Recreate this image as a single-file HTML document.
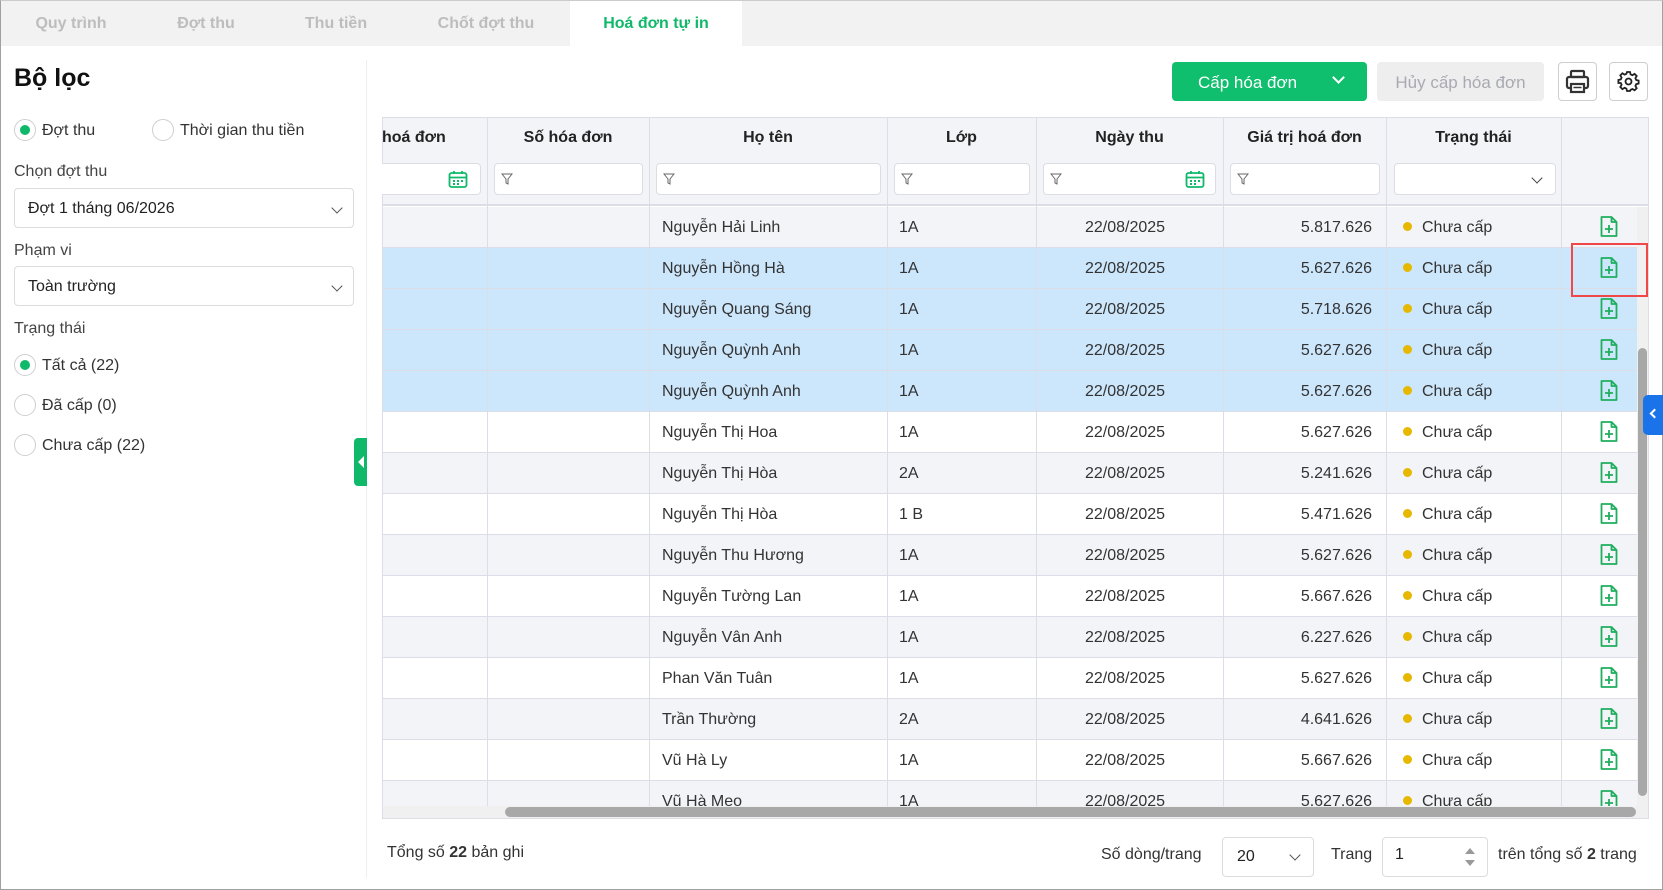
<!DOCTYPE html>
<html><head><meta charset="utf-8"><style>
*{box-sizing:border-box;margin:0;padding:0}
body{width:1663px;height:890px;overflow:hidden;font-family:"Liberation Sans",Arial,sans-serif;color:#222;background:#fff;position:relative;font-size:16px}
.frame{position:absolute;left:0;top:0;width:1663px;height:890px;border:1px solid #a0a0a0;border-top-color:#ccc}
.tabs{position:absolute;left:1px;top:1px;width:1661px;height:45px;background:#f2f2f2}
.tab{position:absolute;top:0;height:45px;line-height:45px;font-size:16px;color:#bdbdbd;font-weight:bold;text-align:center}
.tab.act{background:#fff;color:#10b96a}
.abs{position:absolute}
.lbl{position:absolute;left:14px;font-size:16px;color:#444}
.radio{position:absolute;width:22px;height:22px;border:1px solid #cfcfcf;border-radius:50%;background:#fff}
.radio.on::after{content:"";position:absolute;left:5px;top:5px;width:10px;height:10px;border-radius:50%;background:#10b96a}
.sel{position:absolute;left:14px;width:340px;height:40px;border:1px solid #dcdcdc;border-radius:4px;padding-left:13px;line-height:40px;font-size:16px;color:#222}
.chev{position:absolute;right:12px;top:15px;width:8px;height:8px;border-right:1.6px solid #555;border-bottom:1.6px solid #555;transform:rotate(45deg)}
.th{position:absolute;top:118px;height:40px;line-height:40px;font-weight:bold;font-size:16px;text-align:center;color:#222}
.fi{position:absolute;top:163px;height:32px;background:#fff;border:1px solid #dcdde3;border-radius:4px}
.row{position:absolute;left:382px;width:1255px;height:41px;border-bottom:1px solid #dcdde6;font-size:16px;color:#333}
.row div{position:absolute;top:0;line-height:42px;white-space:nowrap}
.row div.d{top:15px;width:9px;height:9px;border-radius:50%;background:#e6b800;left:1021px}
.vl{position:absolute;top:117px;width:1px;height:690px;background:#dcdde6}
</style></head><body>
<div class="frame"></div>
<div class="tabs">
<div class="tab" style="left:0;width:140px">Quy trình</div>
<div class="tab" style="left:140px;width:130px">Đợt thu</div>
<div class="tab" style="left:270px;width:130px">Thu tiền</div>
<div class="tab" style="left:400px;width:170px">Chốt đợt thu</div>
<div class="tab act" style="left:569px;width:172px">Hoá đơn tự in</div>
</div>

<div class="abs" style="left:14px;top:64px;font-size:25px;font-weight:bold;color:#111">Bộ lọc</div>
<div class="radio on" style="left:14px;top:119px"></div>
<div class="lbl" style="left:42px;top:122px;color:#333">Đợt thu</div>
<div class="radio" style="left:152px;top:119px"></div>
<div class="lbl" style="left:180px;top:122px;color:#333">Thời gian thu tiền</div>
<div class="lbl" style="top:163px">Chọn đợt thu</div>
<div class="sel" style="top:188px">Đợt 1 tháng 06/2026<span class="chev"></span></div>
<div class="lbl" style="top:242px">Phạm vi</div>
<div class="sel" style="top:266px">Toàn trường<span class="chev"></span></div>
<div class="lbl" style="top:320px">Trạng thái</div>
<div class="radio on" style="left:14px;top:354px"></div>
<div class="lbl" style="left:42px;top:357px;color:#333">Tất cả (22)</div>
<div class="radio" style="left:14px;top:394px"></div>
<div class="lbl" style="left:42px;top:397px;color:#333">Đã cấp (0)</div>
<div class="radio" style="left:14px;top:434px"></div>
<div class="lbl" style="left:42px;top:437px;color:#333">Chưa cấp (22)</div>
<div class="abs" style="left:366px;top:60px;width:1px;height:818px;background:#eceef2"></div>
<div class="abs" style="left:354px;top:438px;width:13px;height:48px;background:#10b96a;border-radius:4px 0 0 4px"></div>
<div class="abs" style="left:358px;top:456px;width:0;height:0;border-right:6px solid #fff;border-top:6px solid transparent;border-bottom:6px solid transparent"></div>

<div class="abs" style="left:1172px;top:62px;width:195px;height:39px;background:#10bf6e;border-radius:4px;color:#fff;font-size:17px;line-height:41px;padding-left:26px">Cấp hóa đơn
<span style="position:absolute;right:24px;top:11px;width:9px;height:9px;border-right:2px solid #fff;border-bottom:2px solid #fff;transform:rotate(45deg)"></span></div>
<div class="abs" style="left:1377px;top:62px;width:167px;height:39px;background:#eeeeee;border-radius:4px;color:#a9a9b2;font-size:17px;line-height:41px;text-align:center">Hủy cấp hóa đơn</div>
<div class="abs" style="left:1558px;top:62px;width:39px;height:39px;border:1px solid #cfcfcf;border-radius:4px">
<svg width="37" height="37" viewBox="0 0 37 37"><g fill="none" stroke="#333" stroke-width="2.2"><rect x="12" y="8" width="13" height="6" rx="1"/><rect x="8" y="14" width="21" height="11" rx="2"/><rect x="12" y="21" width="13" height="8" fill="#fff"/></g><line x1="14.5" y1="24.5" x2="22.5" y2="24.5" stroke="#333" stroke-width="1.5"/></svg></div>
<div class="abs" style="left:1609px;top:62px;width:39px;height:39px;border:1px solid #cfcfcf;border-radius:4px">
<svg width="37" height="37" viewBox="0 0 37 37"><g fill="none" stroke="#222" stroke-width="1.8"><circle cx="18.5" cy="18.5" r="3"/><path d="M17 9h3l.6 2.4 1.8.8 2.2-1.3 2.1 2.1-1.3 2.2.8 1.8 2.4.6v3l-2.4.6-.8 1.8 1.3 2.2-2.1 2.1-2.2-1.3-1.8.8L20 28h-3l-.6-2.4-1.8-.8-2.2 1.3-2.1-2.1 1.3-2.2-.8-1.8L8.4 20v-3l2.4-.6.8-1.8-1.3-2.2 2.1-2.1 2.2 1.3 1.8-.8z"/></g></svg></div>

<div class="abs" style="left:382px;top:117px;width:1267px;height:702px;border:1px solid #dcdde6;background:#fff"></div>
<div class="abs" style="left:383px;top:118px;width:1265px;height:88px;background:#f3f4f8;border-bottom:2px solid #dcdde6"></div>
<div class="th" style="left:382px;width:105px;text-align:left">hoá đơn</div>
<div class="th" style="left:487px;width:162px">Số hóa đơn</div>
<div class="th" style="left:649px;width:238px">Họ tên</div>
<div class="th" style="left:887px;width:149px">Lớp</div>
<div class="th" style="left:1036px;width:187px">Ngày thu</div>
<div class="th" style="left:1223px;width:163px">Giá trị hoá đơn</div>
<div class="th" style="left:1386px;width:175px">Trạng thái</div>
<div class="fi" style="left:382px;width:99px;border-left:none;border-radius:0 4px 4px 0"><svg class="abs" style="left:66px;top:6px" width="20" height="19" viewBox="0 0 20 19"><g fill="none" stroke="#10b96a" stroke-width="1.8"><rect x="1.5" y="3" width="17" height="14" rx="2"/><line x1="1.5" y1="7.5" x2="18.5" y2="7.5"/><line x1="6" y1="1" x2="6" y2="4"/><line x1="14" y1="1" x2="14" y2="4"/></g><g fill="#10b96a"><rect x="5" y="10" width="2" height="2"/><rect x="9" y="10" width="2" height="2"/><rect x="13" y="10" width="2" height="2"/><rect x="5" y="13" width="2" height="2"/><rect x="9" y="13" width="2" height="2"/></g></svg></div>
<div class="fi" style="left:494px;width:149px"></div>
<div class="fi" style="left:656px;width:225px"></div>
<div class="fi" style="left:894px;width:136px"></div>
<div class="fi" style="left:1043px;width:173px"><svg class="abs" style="left:141px;top:6px" width="20" height="19" viewBox="0 0 20 19"><g fill="none" stroke="#10b96a" stroke-width="1.8"><rect x="1.5" y="3" width="17" height="14" rx="2"/><line x1="1.5" y1="7.5" x2="18.5" y2="7.5"/><line x1="6" y1="1" x2="6" y2="4"/><line x1="14" y1="1" x2="14" y2="4"/></g><g fill="#10b96a"><rect x="5" y="10" width="2" height="2"/><rect x="9" y="10" width="2" height="2"/><rect x="13" y="10" width="2" height="2"/><rect x="5" y="13" width="2" height="2"/><rect x="9" y="13" width="2" height="2"/></g></svg></div>
<div class="fi" style="left:1230px;width:150px"></div>
<div class="fi" style="left:1394px;width:162px"><span class="chev" style="top:10px;right:14px;border-color:#444"></span></div>
<svg class="abs" style="left:501px;top:173px" width="12" height="12" viewBox="0 0 12 12"><path d="M1 1h10L7 6v5L5 10V6z" fill="none" stroke="#666" stroke-width="1"/></svg>
<svg class="abs" style="left:663px;top:173px" width="12" height="12" viewBox="0 0 12 12"><path d="M1 1h10L7 6v5L5 10V6z" fill="none" stroke="#666" stroke-width="1"/></svg>
<svg class="abs" style="left:901px;top:173px" width="12" height="12" viewBox="0 0 12 12"><path d="M1 1h10L7 6v5L5 10V6z" fill="none" stroke="#666" stroke-width="1"/></svg>
<svg class="abs" style="left:1050px;top:173px" width="12" height="12" viewBox="0 0 12 12"><path d="M1 1h10L7 6v5L5 10V6z" fill="none" stroke="#666" stroke-width="1"/></svg>
<svg class="abs" style="left:1237px;top:173px" width="12" height="12" viewBox="0 0 12 12"><path d="M1 1h10L7 6v5L5 10V6z" fill="none" stroke="#666" stroke-width="1"/></svg>

<div class="abs" style="left:383px;top:207px;width:1254px;height:599px;overflow:hidden">
<div style="position:relative;left:-383px;top:-207px">
<div class="row" style="top:207px;background:#f3f4f8"><div style="left:280px">Nguyễn Hải Linh</div><div style="left:517px">1A</div><div style="left:703px">22/08/2025</div><div style="right:265px">5.817.626</div><div class="d"></div><div style="left:1040px">Chưa cấp</div></div>
<div class="row" style="top:248px;background:#cce6fb"><div style="left:280px">Nguyễn Hồng Hà</div><div style="left:517px">1A</div><div style="left:703px">22/08/2025</div><div style="right:265px">5.627.626</div><div class="d"></div><div style="left:1040px">Chưa cấp</div></div>
<div class="row" style="top:289px;background:#cce6fb"><div style="left:280px">Nguyễn Quang Sáng</div><div style="left:517px">1A</div><div style="left:703px">22/08/2025</div><div style="right:265px">5.718.626</div><div class="d"></div><div style="left:1040px">Chưa cấp</div></div>
<div class="row" style="top:330px;background:#cce6fb"><div style="left:280px">Nguyễn Quỳnh Anh</div><div style="left:517px">1A</div><div style="left:703px">22/08/2025</div><div style="right:265px">5.627.626</div><div class="d"></div><div style="left:1040px">Chưa cấp</div></div>
<div class="row" style="top:371px;background:#cce6fb"><div style="left:280px">Nguyễn Quỳnh Anh</div><div style="left:517px">1A</div><div style="left:703px">22/08/2025</div><div style="right:265px">5.627.626</div><div class="d"></div><div style="left:1040px">Chưa cấp</div></div>
<div class="row" style="top:412px;background:#fff"><div style="left:280px">Nguyễn Thị Hoa</div><div style="left:517px">1A</div><div style="left:703px">22/08/2025</div><div style="right:265px">5.627.626</div><div class="d"></div><div style="left:1040px">Chưa cấp</div></div>
<div class="row" style="top:453px;background:#f3f4f8"><div style="left:280px">Nguyễn Thị Hòa</div><div style="left:517px">2A</div><div style="left:703px">22/08/2025</div><div style="right:265px">5.241.626</div><div class="d"></div><div style="left:1040px">Chưa cấp</div></div>
<div class="row" style="top:494px;background:#fff"><div style="left:280px">Nguyễn Thị Hòa</div><div style="left:517px">1 B</div><div style="left:703px">22/08/2025</div><div style="right:265px">5.471.626</div><div class="d"></div><div style="left:1040px">Chưa cấp</div></div>
<div class="row" style="top:535px;background:#f3f4f8"><div style="left:280px">Nguyễn Thu Hương</div><div style="left:517px">1A</div><div style="left:703px">22/08/2025</div><div style="right:265px">5.627.626</div><div class="d"></div><div style="left:1040px">Chưa cấp</div></div>
<div class="row" style="top:576px;background:#fff"><div style="left:280px">Nguyễn Tường Lan</div><div style="left:517px">1A</div><div style="left:703px">22/08/2025</div><div style="right:265px">5.667.626</div><div class="d"></div><div style="left:1040px">Chưa cấp</div></div>
<div class="row" style="top:617px;background:#f3f4f8"><div style="left:280px">Nguyễn Vân Anh</div><div style="left:517px">1A</div><div style="left:703px">22/08/2025</div><div style="right:265px">6.227.626</div><div class="d"></div><div style="left:1040px">Chưa cấp</div></div>
<div class="row" style="top:658px;background:#fff"><div style="left:280px">Phan Văn Tuân</div><div style="left:517px">1A</div><div style="left:703px">22/08/2025</div><div style="right:265px">5.627.626</div><div class="d"></div><div style="left:1040px">Chưa cấp</div></div>
<div class="row" style="top:699px;background:#f3f4f8"><div style="left:280px">Trần Thường</div><div style="left:517px">2A</div><div style="left:703px">22/08/2025</div><div style="right:265px">4.641.626</div><div class="d"></div><div style="left:1040px">Chưa cấp</div></div>
<div class="row" style="top:740px;background:#fff"><div style="left:280px">Vũ Hà Ly</div><div style="left:517px">1A</div><div style="left:703px">22/08/2025</div><div style="right:265px">5.667.626</div><div class="d"></div><div style="left:1040px">Chưa cấp</div></div>
<div class="row" style="top:781px;background:#f3f4f8"><div style="left:280px">Vũ Hà Meo</div><div style="left:517px">1A</div><div style="left:703px">22/08/2025</div><div style="right:265px">5.627.626</div><div class="d"></div><div style="left:1040px">Chưa cấp</div></div>
</div></div>

<div class="vl" style="left:487px"></div>
<div class="vl" style="left:649px"></div>
<div class="vl" style="left:887px"></div>
<div class="vl" style="left:1036px"></div>
<div class="vl" style="left:1223px"></div>
<div class="vl" style="left:1386px"></div>
<div class="vl" style="left:1561px"></div>

<div class="abs" style="left:1600px;top:216px;width:18px;height:590px;overflow:hidden">
<svg width="18" height="600" viewBox="0 0 18 600">
<defs><g id="ic"><path d="M1.5 1h10l5 5v14H1.5z M11.5 1v5h5" fill="none" stroke="#1fae5e" stroke-width="1.8" stroke-linejoin="round"/><path d="M9 9v8M5 13h8" stroke="#1fae5e" stroke-width="1.8"/></g></defs>
<use href="#ic" y="0"/><use href="#ic" y="41"/><use href="#ic" y="82"/><use href="#ic" y="123"/><use href="#ic" y="164"/><use href="#ic" y="205"/><use href="#ic" y="246"/><use href="#ic" y="287"/><use href="#ic" y="328"/><use href="#ic" y="369"/><use href="#ic" y="410"/><use href="#ic" y="451"/><use href="#ic" y="492"/><use href="#ic" y="533"/><use href="#ic" y="574"/>
</svg></div>

<div class="abs" style="left:1637px;top:207px;width:11px;height:606px;background:#f0f0f0"></div>
<div class="abs" style="left:1638px;top:348px;width:9px;height:448px;background:#a8a8a8;border-radius:5px"></div>
<div class="abs" style="left:383px;top:806px;width:1265px;height:12px;background:#f0f0f0"></div>
<div class="abs" style="left:505px;top:807px;width:1131px;height:10px;background:#a8a8a8;border-radius:5px"></div>

<div class="abs" style="left:1571px;top:243px;width:77px;height:54px;border:2px solid #f04848"></div>

<div class="abs" style="left:1643px;top:395px;width:20px;height:40px;background:#1a73e8;border-radius:5px 0 0 5px"></div>
<div class="abs" style="left:1651px;top:410px;width:7px;height:7px;border-left:2.5px solid #fff;border-bottom:2.5px solid #fff;transform:rotate(45deg)"></div>

<div class="abs" style="left:387px;top:844px;font-size:16px;color:#333">Tổng số <b>22</b> bản ghi</div>
<div class="abs" style="left:1101px;top:846px;font-size:16px;color:#333">Số dòng/trang</div>
<div class="abs" style="left:1222px;top:837px;width:92px;height:40px;border:1px solid #dcdcdc;border-radius:4px;padding-left:14px;line-height:38px">20<span class="chev" style="top:13px;right:14px"></span></div>
<div class="abs" style="left:1331px;top:846px;font-size:16px;color:#333">Trang</div>
<div class="abs" style="left:1382px;top:837px;width:106px;height:40px;border:1px solid #dcdcdc;border-radius:4px;padding-left:12px;line-height:34px">1
<span style="position:absolute;right:12px;top:10px;border-bottom:6px solid #999;border-left:5px solid transparent;border-right:5px solid transparent"></span>
<span style="position:absolute;right:12px;top:22px;border-top:6px solid #999;border-left:5px solid transparent;border-right:5px solid transparent"></span></div>
<div class="abs" style="left:1498px;top:846px;font-size:16px;color:#333">trên tổng số <b>2</b> trang</div>
</body></html>
